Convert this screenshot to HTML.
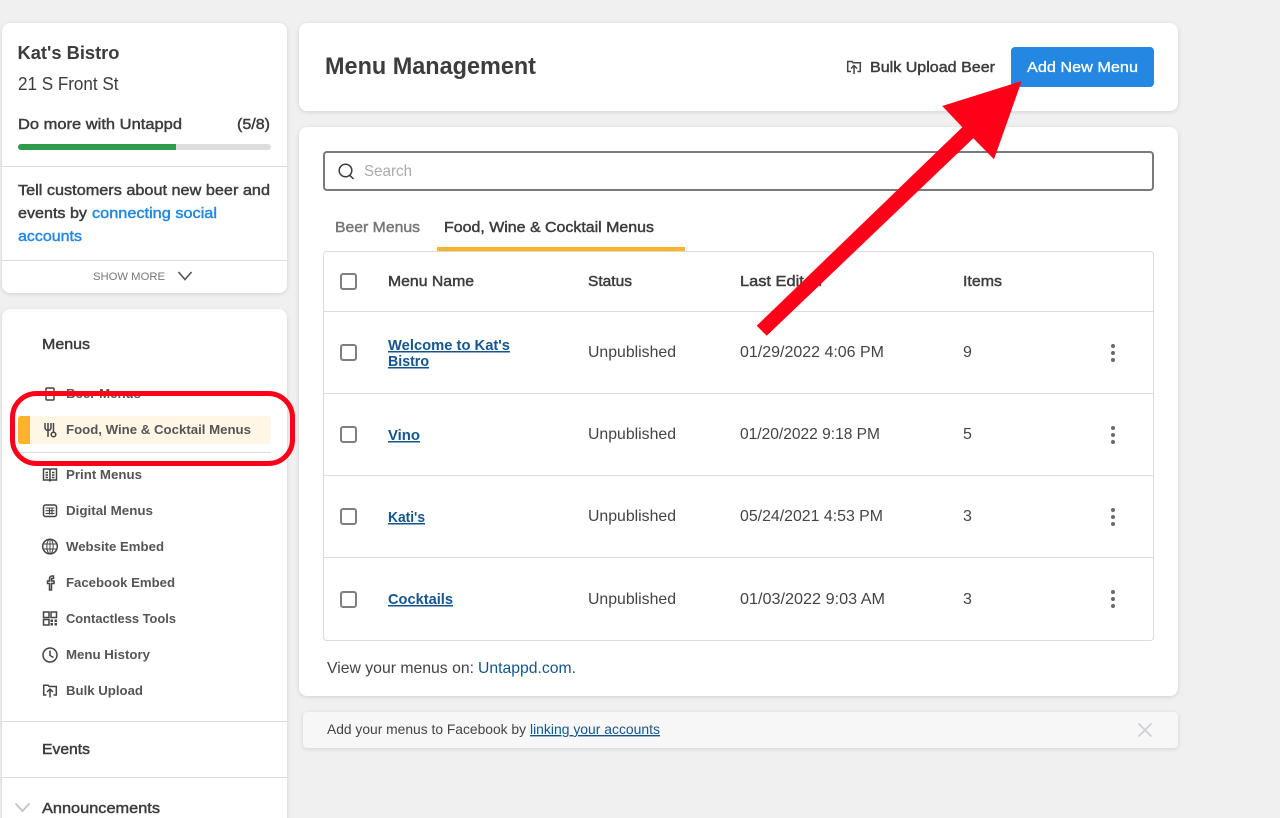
<!DOCTYPE html>
<html lang="en">
<head>
<meta charset="utf-8">
<title>Menu Management</title>
<style>
html,body{margin:0;padding:0;width:1280px;height:818px;overflow:hidden;background:#f0f0f0}
#page{position:relative;width:1280px;height:818px;overflow:hidden;background:#f0f0f0}
.card{position:absolute;background:#fff;border-radius:8px;box-shadow:0 1px 4px rgba(0,0,0,.13)}
svg{position:absolute;left:0;top:0}
text{font-family:"Liberation Sans",sans-serif;fill:#3c3c3c}
.b{font-weight:bold}
.nav{font-size:13px;font-weight:bold;fill:#555}
.h{font-size:15px;fill:#3c3c3c;stroke:#3c3c3c;stroke-width:.45px}
.r{font-size:16px;fill:#444}
.l{font-size:15px;font-weight:bold;fill:#13558f;text-decoration:underline}
.ic{fill:none;stroke:#444;stroke-width:1.5}
.cb{fill:#fff;stroke:#7f7f7f;stroke-width:2}
.ln{stroke:#dcdcdc;stroke-width:1}
</style>
</head>
<body>
<div id="page">
<div class="card" style="left:2px;top:23px;width:285px;height:270px"></div>
<div class="card" style="left:2px;top:309px;width:285px;height:520px"></div>
<div class="card" style="left:299px;top:23px;width:879px;height:88px"></div>
<div class="card" style="left:299px;top:127px;width:879px;height:569px"></div>
<div class="card" style="left:303px;top:712px;width:875px;height:36px;background:#f7f7f7;border-radius:4px"></div>
<svg width="1280" height="818" viewBox="0 0 1280 818" xmlns="http://www.w3.org/2000/svg">
<!-- Sidebar top -->
<text x="17.500" y="59" font-size="18" class="b" textLength="102" lengthAdjust="spacingAndGlyphs">Kat's Bistro</text>
<text x="18" y="90" font-size="18" textLength="100.500" lengthAdjust="spacingAndGlyphs">21 S Front St</text>
<text x="18" y="129" class="h" textLength="164" lengthAdjust="spacingAndGlyphs">Do more with Untappd</text>
<text x="237" y="129" class="h" textLength="33" lengthAdjust="spacingAndGlyphs">(5/8)</text>
<rect x="18" y="144" width="253" height="6" rx="3" fill="#dedede"/>
<path d="M21 144H176V150H21a3 3 0 0 1 0-6z" fill="#2f9c4d"/>
<line x1="2" x2="287" y1="166.500" y2="166.500" class="ln"/>
<text x="18" y="195" class="h" textLength="252" lengthAdjust="spacingAndGlyphs">Tell customers about new beer and</text>
<text x="18" y="218" class="h" textLength="69" lengthAdjust="spacingAndGlyphs">events by</text>
<text x="92" y="218" class="h" style="fill:#2488e2;stroke:#2488e2" textLength="125" lengthAdjust="spacingAndGlyphs">connecting social</text>
<text x="18" y="241" class="h" style="fill:#2488e2;stroke:#2488e2" textLength="64" lengthAdjust="spacingAndGlyphs">accounts</text>
<line x1="2" x2="287" y1="260.500" y2="260.500" class="ln"/>
<text x="93" y="280" font-size="11" style="fill:#777" textLength="72" lengthAdjust="spacingAndGlyphs">SHOW MORE</text>
<path d="M178.500 272l6.500 7.500 6.500-7.500" fill="none" stroke="#555" stroke-width="1.600"/>

<!-- Sidebar nav -->
<text x="42" y="349" class="h" textLength="48" lengthAdjust="spacingAndGlyphs">Menus</text>
<rect x="46" y="388" width="8" height="12" rx="1" class="ic"/>
<text x="66" y="398" class="nav" textLength="75" lengthAdjust="spacingAndGlyphs">Beer Menus</text>
<rect x="18" y="416" width="253" height="28" rx="3" fill="#fff6e6"/>
<path d="M21 416H30V444H21a3 3 0 0 1-3-3V419a3 3 0 0 1 3-3z" fill="#ffb32c"/>
<path class="ic" d="M45 423v4.500a3 3 0 0 0 6 0V423M48 423v14M53.500 423v9"/>
<circle cx="53.500" cy="434.500" r="2.300" class="ic"/>
<text x="66" y="434" class="nav" textLength="185" lengthAdjust="spacingAndGlyphs">Food, Wine &amp; Cocktail Menus</text>
<line x1="18" x2="271" y1="452.500" y2="452.500" class="ln"/>
<path class="ic" d="M43.500 469h5q1.500 0 1.500 1.500q0-1.500 1.500-1.500h5v11h-5q-1.500 0-1.500 1.500q0-1.500-1.500-1.500h-5zM50 470.500v11M45.500 472.500h2.500M45.500 475h2.500M45.500 477.500h2.500M52 472.500h2.500M52 475h2.500M52 477.500h2.500" stroke-width="1.300"/>
<text x="66" y="479" class="nav" textLength="76" lengthAdjust="spacingAndGlyphs">Print Menus</text>
<rect x="43.500" y="505" width="13" height="11.500" rx="2" class="ic"/>
<path class="ic" style="stroke-width:1.100" d="M45.500 508h9M45.500 510.700h9M45.500 513.400h9M49.500 507.500v7M52 507.500v7"/>
<text x="66" y="515" class="nav" textLength="87" lengthAdjust="spacingAndGlyphs">Digital Menus</text>
<circle cx="50" cy="546.500" r="7.300" class="ic"/>
<ellipse cx="50" cy="546.500" rx="3.200" ry="7.300" class="ic" style="stroke-width:1"/>
<path class="ic" style="stroke-width:1" d="M43 544h14M43 549h14M50 539v15"/>
<text x="66" y="551" class="nav" textLength="98" lengthAdjust="spacingAndGlyphs">Website Embed</text>
<path class="ic" d="M53.500 576h-1.500a2.500 2.500 0 0 0-2.500 2.500V581h-2v2.500h2V590h2v-6.500h2.500V581h-2.500v-2.500h2z"/>
<text x="66" y="587" class="nav" textLength="109" lengthAdjust="spacingAndGlyphs">Facebook Embed</text>
<path class="ic" d="M43.500 612h5.500v5.500h-5.500zM51 612h5.500v5.500H51zM43.500 619.500h5.500v5.500h-5.500z"/>
<path d="M50.500 619.500h2.500v2.500h-2.500zM54.500 619.500h2.500v2.500h-2.500zM50.500 623h2.500v2.500h-2.500zM54.500 623h2.500v2.500h-2.500z" fill="#444"/>
<text x="66" y="623" class="nav" textLength="110" lengthAdjust="spacingAndGlyphs">Contactless Tools</text>
<circle cx="50" cy="655" r="7" class="ic"/>
<path class="ic" d="M50 650.500V655.500l3.500 2"/>
<text x="66" y="659" class="nav" textLength="84" lengthAdjust="spacingAndGlyphs">Menu History</text>
<path class="ic" d="M46.500 695H43.700V685.200h4.300l1.200 1.300h7.100V695H53.500M50 697.500V689.500M47 692l3-3 3 3"/>
<text x="66" y="695" class="nav" textLength="77" lengthAdjust="spacingAndGlyphs">Bulk Upload</text>
<line x1="2" x2="287" y1="721.500" y2="721.500" class="ln"/>
<text x="42" y="754" class="h" textLength="48" lengthAdjust="spacingAndGlyphs">Events</text>
<line x1="2" x2="287" y1="777.500" y2="777.500" class="ln"/>
<path d="M15.500 803.500l7 7.500 7-7.500" fill="none" stroke="#c4c4c4" stroke-width="1.800"/>
<text x="42" y="813" class="h" textLength="118" lengthAdjust="spacingAndGlyphs">Announcements</text>

<!-- Red highlight -->
<rect x="12.500" y="393.500" width="280" height="70" rx="24" fill="none" stroke="#ff0019" stroke-width="5"/>

<!-- Header -->
<text x="325" y="74" font-size="24" class="b" textLength="211" lengthAdjust="spacingAndGlyphs">Menu Management</text>
<path class="ic" d="M851 71.500H847.700V61.500h4.300l1.200 1.300h7.100V71.500H857.500M854 74V65.500M851 68.500l3-3 3 3"/>
<text x="870" y="72" class="h" textLength="125" lengthAdjust="spacingAndGlyphs">Bulk Upload Beer</text>
<rect x="1011" y="47" width="143" height="40" rx="4" fill="#2488e2"/>
<text x="1027" y="72" class="h" style="fill:#fff;stroke:#fff;stroke-width:.3px" textLength="111" lengthAdjust="spacingAndGlyphs">Add New Menu</text>

<!-- Search -->
<rect x="324" y="152" width="829" height="38" rx="3" fill="#fff" stroke="#7a7a7a" stroke-width="2"/>
<circle cx="345.500" cy="170.500" r="6.300" fill="none" stroke="#3c3c3c" stroke-width="1.500"/>
<path d="M350 175.500l3.500 3.500" stroke="#3c3c3c" stroke-width="1.500" fill="none"/>
<text x="364" y="176" font-size="16" style="fill:#aaa" textLength="48" lengthAdjust="spacingAndGlyphs">Search</text>

<!-- Tabs -->
<text x="335" y="232" class="h" style="fill:#777;stroke:#777" textLength="85" lengthAdjust="spacingAndGlyphs">Beer Menus</text>
<text x="444" y="232" class="h" textLength="210" lengthAdjust="spacingAndGlyphs">Food, Wine &amp; Cocktail Menus</text>

<!-- Table -->
<rect x="323.500" y="251.500" width="830" height="389" rx="3" fill="#fff" stroke="#dcdcdc"/>
<rect x="437" y="247" width="248" height="4" fill="#ffb32c"/>
<line x1="324" x2="1153" y1="311.500" y2="311.500" class="ln"/>
<line x1="324" x2="1153" y1="393.500" y2="393.500" class="ln"/>
<line x1="324" x2="1153" y1="475.500" y2="475.500" class="ln"/>
<line x1="324" x2="1153" y1="557.500" y2="557.500" class="ln"/>
<rect x="341" y="274" width="15" height="15" rx="2" class="cb"/>
<text x="388" y="286" class="h" textLength="86" lengthAdjust="spacingAndGlyphs">Menu Name</text>
<text x="588" y="286" class="h" textLength="44" lengthAdjust="spacingAndGlyphs">Status</text>
<text x="740" y="286" class="h" textLength="82" lengthAdjust="spacingAndGlyphs">Last Edited</text>
<text x="963" y="286" class="h" textLength="39" lengthAdjust="spacingAndGlyphs">Items</text>

<rect x="341" y="345" width="15" height="15" rx="2" class="cb"/>
<text x="388" y="350" class="l" textLength="122" lengthAdjust="spacingAndGlyphs">Welcome to Kat's</text>
<text x="388" y="366" class="l" textLength="41" lengthAdjust="spacingAndGlyphs">Bistro</text>
<text x="588" y="357" class="r" textLength="88" lengthAdjust="spacingAndGlyphs">Unpublished</text>
<text x="740" y="357" class="r" textLength="144" lengthAdjust="spacingAndGlyphs">01/29/2022 4:06 PM</text>
<text x="963" y="357" class="r">9</text>
<g fill="#6a6a6a"><circle cx="1113" cy="346" r="2"/><circle cx="1113" cy="353" r="2"/><circle cx="1113" cy="360" r="2"/></g>

<rect x="341" y="427" width="15" height="15" rx="2" class="cb"/>
<text x="388" y="440" class="l" textLength="32" lengthAdjust="spacingAndGlyphs">Vino</text>
<text x="588" y="439" class="r" textLength="88" lengthAdjust="spacingAndGlyphs">Unpublished</text>
<text x="740" y="439" class="r" textLength="140" lengthAdjust="spacingAndGlyphs">01/20/2022 9:18 PM</text>
<text x="963" y="439" class="r">5</text>
<g fill="#6a6a6a"><circle cx="1113" cy="428" r="2"/><circle cx="1113" cy="435" r="2"/><circle cx="1113" cy="442" r="2"/></g>

<rect x="341" y="509" width="15" height="15" rx="2" class="cb"/>
<text x="388" y="522" class="l" textLength="37" lengthAdjust="spacingAndGlyphs">Kati's</text>
<text x="588" y="521" class="r" textLength="88" lengthAdjust="spacingAndGlyphs">Unpublished</text>
<text x="740" y="521" class="r" textLength="143" lengthAdjust="spacingAndGlyphs">05/24/2021 4:53 PM</text>
<text x="963" y="521" class="r">3</text>
<g fill="#6a6a6a"><circle cx="1113" cy="510" r="2"/><circle cx="1113" cy="517" r="2"/><circle cx="1113" cy="524" r="2"/></g>

<rect x="341" y="592" width="15" height="15" rx="2" class="cb"/>
<text x="388" y="604" class="l" textLength="65" lengthAdjust="spacingAndGlyphs">Cocktails</text>
<text x="588" y="604" class="r" textLength="88" lengthAdjust="spacingAndGlyphs">Unpublished</text>
<text x="740" y="604" class="r" textLength="145" lengthAdjust="spacingAndGlyphs">01/03/2022 9:03 AM</text>
<text x="963" y="604" class="r">3</text>
<g fill="#6a6a6a"><circle cx="1113" cy="592" r="2"/><circle cx="1113" cy="599" r="2"/><circle cx="1113" cy="606" r="2"/></g>

<text x="327" y="673" class="r" textLength="147" lengthAdjust="spacingAndGlyphs">View your menus on:</text>
<text x="478" y="673" class="r" style="fill:#13558f" textLength="98" lengthAdjust="spacingAndGlyphs">Untappd.com.</text>

<!-- Banner -->
<text x="327" y="734" font-size="14" style="fill:#444" textLength="199" lengthAdjust="spacingAndGlyphs">Add your menus to Facebook by</text>
<text x="530" y="734" font-size="14" style="fill:#13558f;text-decoration:underline" textLength="130" lengthAdjust="spacingAndGlyphs">linking your accounts</text>
<path d="M1138.500 723.500l13 13M1151.500 723.500l-13 13" stroke="#ccd0d8" stroke-width="1.800" fill="none"/>

<!-- Red arrow -->
<polygon points="756.700,325.700 962.300,127.300 942.300,106 1021.700,81 994,159.300 973.300,138.300 766.700,335.700" fill="#ff0019"/>
</svg>
</div>
</body>
</html>
